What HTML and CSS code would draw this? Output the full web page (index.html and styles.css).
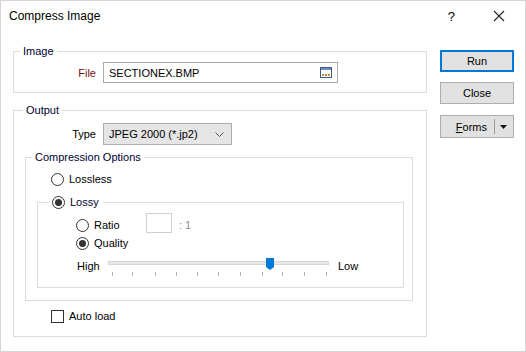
FILE: index.html
```html
<!DOCTYPE html>
<html lang="en">
<head>
    <meta charset="UTF-8">
    <title>Compress Image</title>
    <link rel="stylesheet" href="styles.css">
</head>
<body>

<div class="window">
    <!-- title bar -->
    <div class="titlebar">
        <span class="title">Compress Image</span>
        <span class="help">?</span>
        <svg class="close-x" width="12" height="12" viewBox="0 0 12 12">
            <path d="M1 1 L11 11 M11 1 L1 11" stroke="#222" stroke-width="1.1" fill="none"/>
        </svg>
    </div>

    <div class="content">
        <div class="main">
            <!-- Image -->
            <div class="group image-group">
                <span class="legend">Image</span>
                <div class="row">
                    <span class="lbl file-lbl">File</span>
                    <div class="textbox file-box">
                        <span>SECTIONEX.BMP</span>
                        <svg class="browse" width="12" height="11" viewBox="0 0 12 11">
                            <rect x="0.5" y="0.5" width="11" height="10" fill="#fff" stroke="#3b5a85"/>
                            <rect x="1" y="1" width="10" height="2" fill="#6f8fbf"/>
                            <rect x="2" y="7" width="2" height="2" fill="#c58a2a"/>
                            <rect x="5" y="7" width="2" height="2" fill="#c58a2a"/>
                            <rect x="8" y="7" width="2" height="2" fill="#c58a2a"/>
                        </svg>
                    </div>
                </div>
            </div>

            <!-- Output -->
            <div class="group output-group">
                <span class="legend">Output</span>
                <div class="row">
                    <span class="lbl">Type</span>
                    <div class="select">
                        <span>JPEG 2000 (*.jp2)</span>
                        <svg width="9" height="5" viewBox="0 0 9 5">
                            <path d="M0.5 0.5 L4.5 4.5 L8.5 0.5" stroke="#555" fill="none"/>
                        </svg>
                    </div>
                </div>

                <div class="group comp-group">
                    <span class="legend">Compression Options</span>
                    <div class="opt lossless"><span class="radio"></span>Lossless</div>

                    <div class="group lossy-group">
                        <span class="legend legend-radio"><span class="radio checked"></span>Lossy</span>
                        <div class="opt ratio-row">
                            <span class="radio"></span>
                            <span class="ratio-lbl">Ratio</span>
                            <span class="numbox"></span>
                            <span class="suffix">: 1</span>
                        </div>
                        <div class="opt quality-row"><span class="radio checked"></span>Quality</div>
                        <div class="slider-row">
                            <span class="high">High</span>
                            <svg class="slider" width="221" height="20" viewBox="0 0 221 20">
                                <rect x="0.5" y="4.5" width="220" height="3" fill="#e7e7e7" stroke="#d6d6d6"/>
                                <g stroke="#b4b4b4">
                                    <line x1="4.5" y1="15" x2="4.5" y2="19"/>
                                    <line x1="24.5" y1="15" x2="24.5" y2="19"/>
                                    <line x1="47.5" y1="15" x2="47.5" y2="19"/>
                                    <line x1="68.5" y1="15" x2="68.5" y2="19"/>
                                    <line x1="89.5" y1="15" x2="89.5" y2="19"/>
                                    <line x1="110.5" y1="15" x2="110.5" y2="19"/>
                                    <line x1="132.5" y1="15" x2="132.5" y2="19"/>
                                    <line x1="154.5" y1="15" x2="154.5" y2="19"/>
                                    <line x1="174.5" y1="15" x2="174.5" y2="19"/>
                                    <line x1="196.5" y1="15" x2="196.5" y2="19"/>
                                    <line x1="218.5" y1="15" x2="218.5" y2="19"/>
                                </g>
                                <path d="M158 1 H166 V10 L162 13 L158 10 Z" fill="#0078d7"/>
                            </svg>
                            <span class="low">Low</span>
                        </div>
                    </div>
                </div>

                <div class="opt autoload"><span class="checkbox"></span>Auto load</div>
            </div>
        </div>

        <!-- buttons -->
        <div class="buttons">
            <div class="btn default">Run</div>
            <div class="btn">Close</div>
            <div class="btn split">
                <span class="split-text"><u>F</u>orms</span>
                <span class="split-sep"></span>
                <svg width="7" height="4" viewBox="0 0 7 4"><path d="M0 0 H7 L3.5 4 Z" fill="#111"/></svg>
            </div>
        </div>
    </div>
</div>

</body>
</html>
```

FILE: styles.css
```css
* {
    box-sizing: border-box;
}
body {
    margin: 0;
    background: #fff;
    font-family: "Segoe UI", "Liberation Sans", Arial, sans-serif;
    font-size: 11px;
    color: #000;
}
.window {
    width: 526px;
    height: 352px;
    border: 1px solid #d6d6d6;
    background: #fff;
}
.titlebar {
    height: 30px;
    display: flex;
    align-items: center;
    padding-left: 8px;
}
.title {
    font-size: 12px;
    flex: 1;
}
.help {
    font-size: 13px;
    margin-right: 38px;
}
.close-x {
    margin-right: 20px;
}
.content {
    display: flex;
    padding-left: 12px;
}
.main {
    width: 414px;
    margin-top: 20px;
}
.buttons {
    margin-top: 19px;
    margin-left: 13px;
    display: flex;
    flex-direction: column;
    gap: 10px;
}

/* group boxes */
.group {
    position: relative;
    border: 1px solid #dcdcdc;
}
.legend {
    position: absolute;
    top: -9px;
    left: 6px;
    padding: 0 3px;
    background: #fff;
    line-height: 16px;
    color: #000033;
}
.image-group {
    height: 42px;
    padding-top: 10px;
}
.output-group {
    height: 227px;
    margin-top: 17px;
    padding-top: 12px;
}
.output-group > .legend {
    left: 9px;
}
.row {
    display: flex;
    align-items: center;
    gap: 7px;
}
.lbl {
    width: 82px;
    text-align: right;
}
.file-lbl {
    color: #7a1010;
}
.textbox {
    width: 235px;
    height: 21px;
    border: 1px solid #a9a9a9;
    display: flex;
    align-items: center;
    justify-content: space-between;
    padding: 0 5px 0 5px;
    background: #fff;
}
.select {
    width: 129px;
    height: 22px;
    border: 1px solid #adadad;
    background: #e5e5e5;
    display: flex;
    align-items: center;
    justify-content: space-between;
    padding: 0 7px 0 5px;
}

.comp-group {
    margin: 12px 13px 0 11px;
    height: 144px;
}
.comp-group > .legend {
    left: 6px;
}
.opt {
    display: flex;
    align-items: center;
    height: 16px;
}
.lossless {
    margin-top: 13px;
    padding-left: 25px;
}
.radio {
    width: 13px;
    height: 13px;
    border: 1px solid #333;
    border-radius: 50%;
    margin-right: 5px;
    background: #fff;
    display: flex;
    align-items: center;
    justify-content: center;
    flex-shrink: 0;
}
.radio.checked::after {
    content: "";
    width: 7px;
    height: 7px;
    border-radius: 50%;
    background: #333;
}
.lossy-group {
    margin: 15px 8px 0 11px;
    height: 86px;
    padding-top: 14px;
}
.legend-radio {
    left: 11px;
    display: flex;
    align-items: center;
    padding: 0 4px 0 3px;
}
.ratio-row {
    padding-left: 38px;
}
.ratio-lbl {
    width: 52px;
}
.numbox {
    width: 26px;
    height: 20px;
    border: 1px solid #d0d0d0;
    align-self: flex-start;
    margin-top: -4px;
}
.suffix {
    color: #8c8c8c;
    margin-left: 7px;
}
.quality-row {
    margin-top: 2px;
    padding-left: 38px;
}
.slider-row {
    display: flex;
    align-items: flex-start;
    margin-top: 7px;
    padding-left: 39px;
    height: 20px;
}
.high {
    width: 31px;
    line-height: 16px;
}
.slider {
    display: block;
    margin-top: -1px;
}
.low {
    margin-left: 9px;
    line-height: 16px;
}
.autoload {
    margin-top: 7px;
    padding-left: 37px;
}
.checkbox {
    width: 13px;
    height: 13px;
    border: 1px solid #333;
    margin-right: 5px;
    background: #fff;
}

/* buttons */
.btn {
    width: 74px;
    height: 22px;
    border: 1px solid #adadad;
    background: #e1e1e1;
    display: flex;
    align-items: center;
    justify-content: center;
}
.btn.default {
    border: 2px solid #0078d7;
}
.btn.split {
    height: 23px;
    margin-top: 1px;
    justify-content: flex-end;
    padding-right: 6px;
}
.split-sep {
    width: 1px;
    height: 15px;
    background: #9a9a9a;
    margin: 0 5px 0 7px;
}
```
